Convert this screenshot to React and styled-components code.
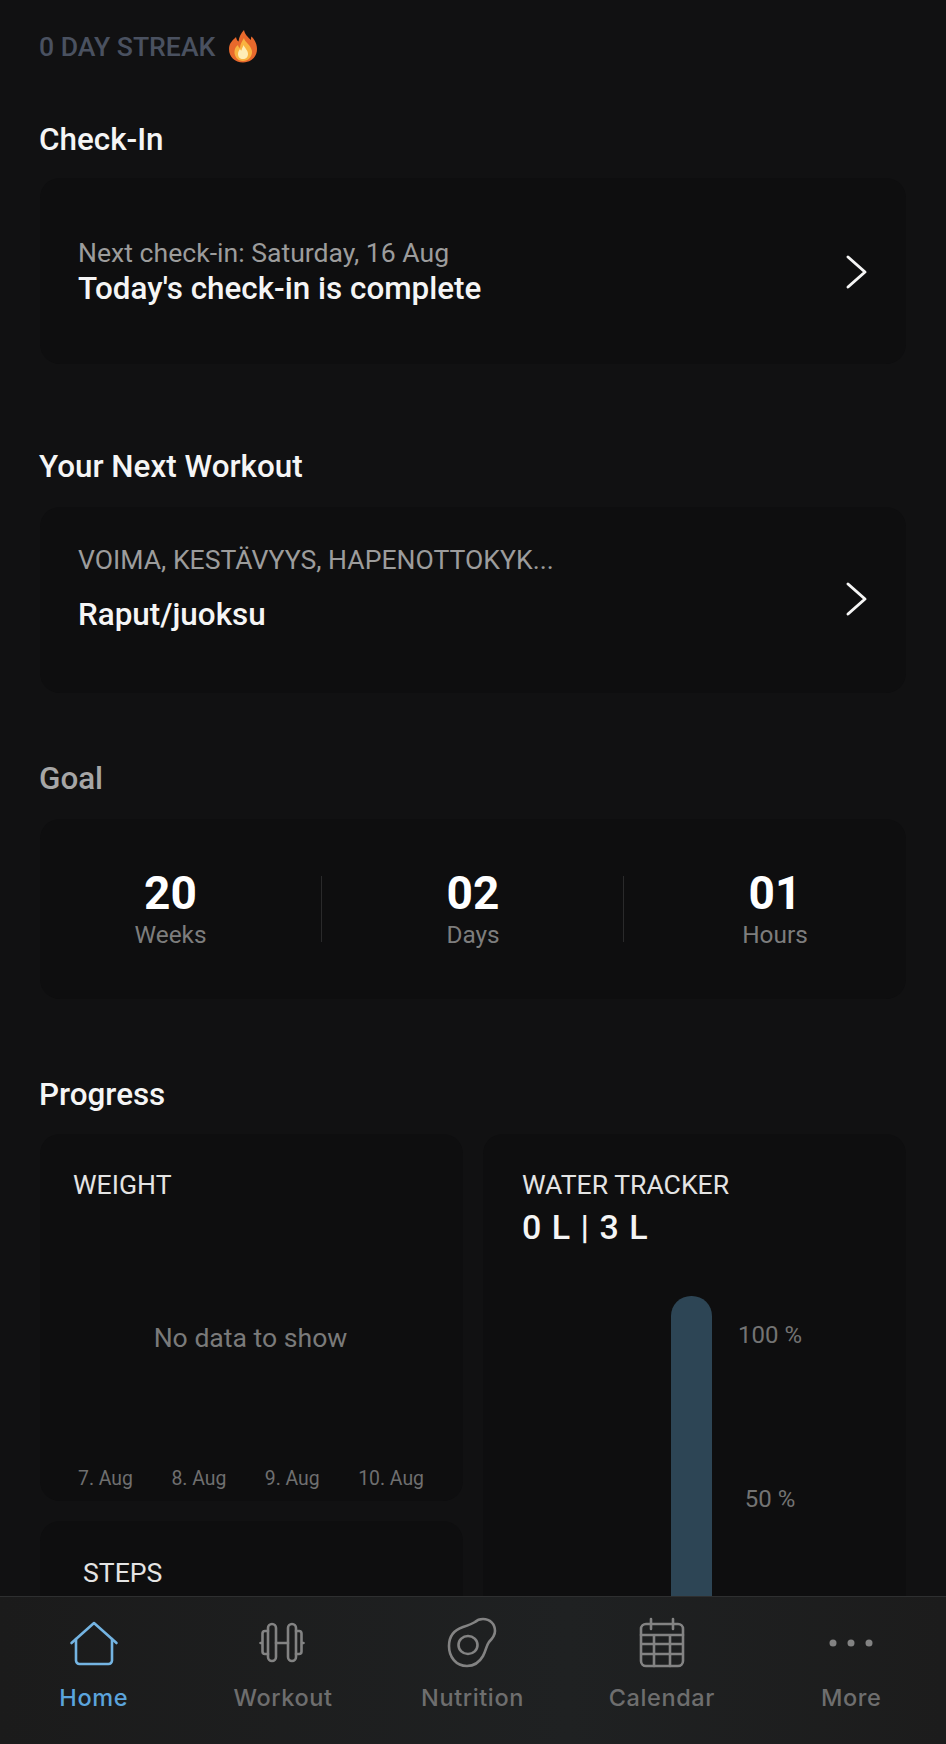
import React from "react";
import styled, { createGlobalStyle } from "styled-components";

const Global = createGlobalStyle`
  html, body { margin: 0; padding: 0; background: #111112; }
  * { box-sizing: border-box; }
`;

const Screen = styled.div`
  width: 946px; height: 1744px; display: flex; flex-direction: column;
  background: #111112; font-family: Roboto, "Liberation Sans", sans-serif; overflow: hidden;
`;
const Scroll = styled.main`
  flex: 1; min-height: 0; overflow: hidden; padding: 29px 40px 0;
`;
const Streak = styled.div`
  display: flex; align-items: center; gap: 13px; height: 34px; margin-left: -1px;
  font-size: 26.6px; font-weight: 500; color: #4a5160;
`;
const SectionTitle = styled.h2`
  margin: ${p => p.$top}px 0 0 -1px; height: 36px; line-height: 36px;
  font-size: 31.4px; font-weight: 500; color: ${p => p.$muted ? "#a6a6a6" : "#f5f5f5"};
`;
const Card = styled.section`
  background: #0e0e0f; border-radius: 20px;
`;
const LinkCard = styled(Card)`
  margin-top: ${p => p.$top}px; height: 186px; padding: 0 38px; display: flex; align-items: center; justify-content: space-between;
`;
const LinkText = styled.div`
  display: flex; flex-direction: column; gap: ${p => p.$gap}px; margin: ${p => p.$down}px 0 ${p => p.$up}px;
`;
const Overline = styled.div`
  font-size: 26.6px; line-height: 32px; color: #9c9c9c;
`;
const Headline = styled.div`
  font-size: 31.4px; line-height: 36px; font-weight: 500; color: #f5f5f5;
`;
const Chevron = styled.svg`
  width: 24px; height: 36px; fill: none; stroke: #f5f5f5; stroke-width: 3; stroke-linecap: round; stroke-linejoin: round;
  margin-top: ${p => p.$nudge}px;
`;
const GoalCard = styled(Card)`
  margin-top: 22px; height: 180px; display: grid; grid-template-columns: repeat(3, 302px); justify-content: center; align-items: center;
`;
const GoalCell = styled.div`
  height: 66px; display: flex; flex-direction: column; align-items: center; justify-content: center; margin-left: -1px;
  border-left: ${p => p.$divider ? "1px solid #2a2a2b" : "none"};
`;
const GoalValue = styled.div`
  font-size: 46px; line-height: 46px; font-weight: 700; color: #fff;
`;
const GoalLabel = styled.div`
  margin-top: 5px; font-size: 24.4px; line-height: 28px; color: #7d7d7d;
`;
const Grid = styled.div`
  margin-top: 21px; display: grid; grid-template-columns: 423px 423px; gap: 20px; align-items: start;
`;
const Column = styled.div`
  display: flex; flex-direction: column; gap: 20px;
`;
const WeightCard = styled(Card)`
  height: 367px; padding: 35px 39px 0 33px; display: flex; flex-direction: column;
`;
const CardLabel = styled.div`
  font-size: 26.6px; line-height: 32px; color: #e4e4e4;
`;
const Empty = styled.div`
  flex: 1; display: flex; align-items: center; justify-content: center; margin: 0 -38px 0 -34px;
  font-size: 26.6px; color: #7a7a7a; padding-top: 8px;
`;
const Axis = styled.div`
  display: flex; justify-content: space-between; margin: 0 0 9px 5px; font-size: 19.4px; line-height: 26px; color: #6f6f6f;
`;
const StepsCard = styled(Card)`
  height: 300px; padding: 36px 43px;
`;
const WaterCard = styled(Card)`
  height: 700px; padding: 35px 39px;
`;
const WaterValue = styled.div`
  margin-top: 5px; font-size: 34px; line-height: 42px; font-weight: 500; letter-spacing: 1px; color: #f5f5f5;
`;
const Gauge = styled.div`
  margin: 48px 0 0 149px; display: flex; gap: 10px;
`;
const Bar = styled.div`
  width: 41px; height: 500px; background: #2d4555; border-radius: 20px 20px 0 0;
`;
const Scale = styled.div`
  width: 96px; padding-top: 25px; display: flex; flex-direction: column; align-items: center; gap: 136px;
  font-size: 24px; line-height: 28px; color: #737373;
`;
const TabBar = styled.nav`
  height: 148px; flex-shrink: 0; display: grid; grid-template-columns: repeat(5, 1fr); margin-left: -1px;
  background: linear-gradient(90deg, #1b1b1b, #1f2122 60%, #1c1c1c); border-top: 1px solid #2e2f30;
`;
const Tab = styled.div`
  display: flex; flex-direction: column; align-items: center; padding-top: 19px;
  color: ${p => p.$active ? "#5ba4dc" : "#6e6e6e"};
`;
const TabIcon = styled.svg`
  width: 54px; height: 54px; fill: none; stroke: ${p => p.$active ? "#74b4e2" : "#838383"}; stroke-width: 2.6; stroke-linecap: round; stroke-linejoin: round;
`;
const TabLabel = styled.div`
  margin-top: 13px; font-family: Inter, Roboto, sans-serif; font-size: 23.5px; line-height: 30px; font-weight: 500; letter-spacing: 0.6px;
`;

const Flame = () => (
  <svg width="30" height="34" viewBox="0 0 30 34">
    <path fill="#e8692c" d="M16 1c1 5 4 7 7 10 0-2 0-3 .5-3.500C27 11 29 15 29 20c0 8-6 13.500-14 13.500S1 28 1 20c0-6 4-9 7-12 .5 2 1 3.500 2.500 4.500C11 8 13 4 16 1z"/>
    <path fill="#f9b340" d="M16 9c.5 4 7 7 8 13 .5 6-4 10-9 10S6 28 6.500 22c.3-3 2-5 3.500-6 .3 1.500.8 2.500 2 3C12 16 14 12 16 9z"/>
    <path fill="#feedb5" d="M15.500 16c1 3 4.500 5 4.500 9 0 3-2 5-5 5s-5-2-5-5c0-2 1-4 2-5 .5 1 1 1.500 1.500 1.500.2-2 1.500-3.500 2-5.500z"/>
  </svg>
);

const ChevronIcon = ({ nudge }) => (
  <Chevron viewBox="0 0 24 36" $nudge={nudge}><path d="M4 3 21 18 4 33" /></Chevron>
);

const tabs = [
  { label: "Home", active: true, icon: <><path d="M4.500 27 27 7l22.500 20" /><path d="M9 23v21.500a3.500 3.500 0 0 0 3.500 3.500h29a3.500 3.500 0 0 0 3.500-3.500V23" /></> },
  { label: "Workout", icon: <><rect x="12" y="8" width="8" height="37" rx="4"/><rect x="32" y="8" width="8" height="37" rx="4"/><path d="M20 27h12M12 15H9a2.500 2.500 0 0 0-2.500 2.500v18A2.500 2.500 0 0 0 9 38h3M40 15h3a2.500 2.500 0 0 1 2.500 2.500v18A2.500 2.500 0 0 1 43 38h-3M6.500 27H4.500M45.500 27h2"/></> },
  { label: "Nutrition", icon: <><path d="M38 3c7 0 12 5 12 12 0 5-3 8-6 11-3 4-3 9-6 14-4 7-9 10-16 10C11 50 4 41 4 30 4 21 9 14 18 11c6-2 9-3 12-5 2-2 5-3 8-3z"/><ellipse cx="23" cy="29" rx="9.500" ry="9" /></> },
  { label: "Calendar", icon: <><rect x="6" y="8" width="42" height="42" rx="5"/><path d="M16 3v10M38 3v10M6 19h42M7 28h40M7 38h40M19 19v31M35 19v31"/></> },
  { label: "More", icon: null },
];

export default function App() {
  return (
    <Screen>
      <Global />
      <Scroll>
        <Streak>0 DAY STREAK <Flame /></Streak>
        <SectionTitle $top={59}>Check-In</SectionTitle>
        <LinkCard $top={20}>
          <LinkText $gap={2} $down={2} $up={0}>
            <Overline>Next check-in: Saturday, 16 Aug</Overline>
            <Headline>Today's check-in is complete</Headline>
          </LinkText>
          <ChevronIcon nudge={2} />
        </LinkCard>
        <SectionTitle $top={85}>Your Next Workout</SectionTitle>
        <LinkCard $top={22}>
          <LinkText $gap={21} $down={0} $up={23}>
            <Overline>VOIMA, KESTÄVYYS, HAPENOTTOKYK...</Overline>
            <Headline>Raput/juoksu</Headline>
          </LinkText>
          <ChevronIcon nudge={-3} />
        </LinkCard>
        <SectionTitle $top={68} $muted>Goal</SectionTitle>
        <GoalCard>
          <GoalCell><GoalValue>20</GoalValue><GoalLabel>Weeks</GoalLabel></GoalCell>
          <GoalCell $divider><GoalValue>02</GoalValue><GoalLabel>Days</GoalLabel></GoalCell>
          <GoalCell $divider><GoalValue>01</GoalValue><GoalLabel>Hours</GoalLabel></GoalCell>
        </GoalCard>
        <SectionTitle $top={78}>Progress</SectionTitle>
        <Grid>
          <Column>
            <WeightCard>
              <CardLabel>WEIGHT</CardLabel>
              <Empty>No data to show</Empty>
              <Axis><span>7. Aug</span><span>8. Aug</span><span>9. Aug</span><span>10. Aug</span></Axis>
            </WeightCard>
            <StepsCard><CardLabel>STEPS</CardLabel></StepsCard>
          </Column>
          <WaterCard>
            <CardLabel>WATER TRACKER</CardLabel>
            <WaterValue>0 L | 3 L</WaterValue>
            <Gauge>
              <Bar />
              <Scale><span>100 %</span><span>50 %</span></Scale>
            </Gauge>
          </WaterCard>
        </Grid>
      </Scroll>
      <TabBar>
        {tabs.map(t => (
          <Tab key={t.label} $active={t.active}>
            <TabIcon viewBox="0 0 54 54" $active={t.active}>
              {t.icon || (
                <g fill="#838383" stroke="none">
                  <circle cx="9" cy="27" r="3.500" /><circle cx="27" cy="27" r="3.500" /><circle cx="45" cy="27" r="3.500" />
                </g>
              )}
            </TabIcon>
            <TabLabel>{t.label}</TabLabel>
          </Tab>
        ))}
      </TabBar>
    </Screen>
  );
}
